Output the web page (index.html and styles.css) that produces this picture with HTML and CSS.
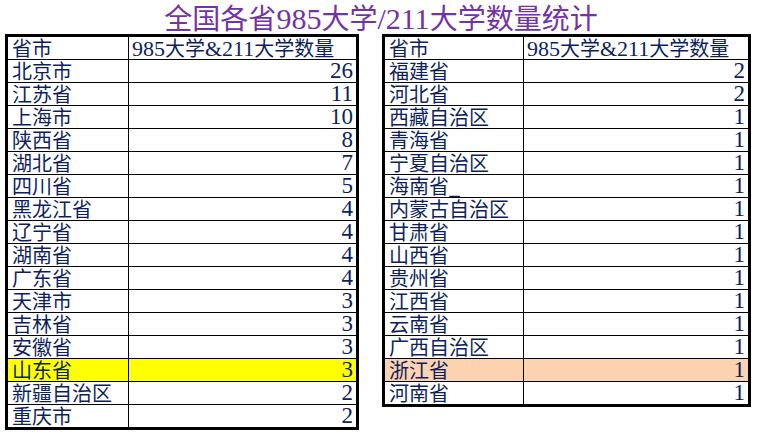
FILE: index.html
```html
<!DOCTYPE html>
<html lang="zh">
<head>
<meta charset="utf-8">
<link rel="stylesheet" href="styles.css">
</head>
<body>
<div class="page">
  <h1 class="title">全国各省<span class="lat">985</span>大学<span class="lat">/211</span>大学数量统计</h1>
  <div class="tables">
    <table class="sheet sheet-left">
      <colgroup><col class="c1"><col></colgroup>
      <tr><td><div class="cell">省市</div></td><td class="hd"><div class="cell"><span class="lat">985</span>大学<span class="lat">&amp;211</span>大学数量</div></td></tr>
      <tr><td><div class="cell">北京市</div></td><td class="num"><div class="cell">26</div></td></tr>
      <tr><td><div class="cell">江苏省</div></td><td class="num"><div class="cell">11</div></td></tr>
      <tr><td><div class="cell">上海市</div></td><td class="num"><div class="cell">10</div></td></tr>
      <tr><td><div class="cell">陕西省</div></td><td class="num"><div class="cell">8</div></td></tr>
      <tr><td><div class="cell">湖北省</div></td><td class="num"><div class="cell">7</div></td></tr>
      <tr><td><div class="cell">四川省</div></td><td class="num"><div class="cell">5</div></td></tr>
      <tr><td><div class="cell">黑龙江省</div></td><td class="num"><div class="cell">4</div></td></tr>
      <tr><td><div class="cell">辽宁省</div></td><td class="num"><div class="cell">4</div></td></tr>
      <tr><td><div class="cell">湖南省</div></td><td class="num"><div class="cell">4</div></td></tr>
      <tr><td><div class="cell">广东省</div></td><td class="num"><div class="cell">4</div></td></tr>
      <tr><td><div class="cell">天津市</div></td><td class="num"><div class="cell">3</div></td></tr>
      <tr><td><div class="cell">吉林省</div></td><td class="num"><div class="cell">3</div></td></tr>
      <tr><td><div class="cell">安徽省</div></td><td class="num"><div class="cell">3</div></td></tr>
      <tr class="hl-yellow"><td><div class="cell">山东省</div></td><td class="num"><div class="cell">3</div></td></tr>
      <tr><td><div class="cell">新疆自治区</div></td><td class="num"><div class="cell">2</div></td></tr>
      <tr><td><div class="cell">重庆市</div></td><td class="num"><div class="cell">2</div></td></tr>
    </table>
    <table class="sheet sheet-right">
      <colgroup><col class="c1"><col></colgroup>
      <tr><td><div class="cell">省市</div></td><td class="hd"><div class="cell"><span class="lat">985</span>大学<span class="lat">&amp;211</span>大学数量</div></td></tr>
      <tr><td><div class="cell">福建省</div></td><td class="num"><div class="cell">2</div></td></tr>
      <tr><td><div class="cell">河北省</div></td><td class="num"><div class="cell">2</div></td></tr>
      <tr><td><div class="cell">西藏自治区</div></td><td class="num"><div class="cell">1</div></td></tr>
      <tr><td><div class="cell">青海省</div></td><td class="num"><div class="cell">1</div></td></tr>
      <tr><td><div class="cell">宁夏自治区</div></td><td class="num"><div class="cell">1</div></td></tr>
      <tr><td><div class="cell">海南省_</div></td><td class="num"><div class="cell">1</div></td></tr>
      <tr><td><div class="cell">内蒙古自治区</div></td><td class="num"><div class="cell">1</div></td></tr>
      <tr><td><div class="cell">甘肃省</div></td><td class="num"><div class="cell">1</div></td></tr>
      <tr><td><div class="cell">山西省</div></td><td class="num"><div class="cell">1</div></td></tr>
      <tr><td><div class="cell">贵州省</div></td><td class="num"><div class="cell">1</div></td></tr>
      <tr><td><div class="cell">江西省</div></td><td class="num"><div class="cell">1</div></td></tr>
      <tr><td><div class="cell">云南省</div></td><td class="num"><div class="cell">1</div></td></tr>
      <tr><td><div class="cell">广西自治区</div></td><td class="num"><div class="cell">1</div></td></tr>
      <tr class="hl-peach"><td><div class="cell">浙江省</div></td><td class="num"><div class="cell">1</div></td></tr>
      <tr><td><div class="cell">河南省</div></td><td class="num"><div class="cell">1</div></td></tr>
    </table>
  </div>
</div>
</body>
</html>
```
FILE: styles.css
```css
html, body {
  margin: 0;
  padding: 0;
  background: #ffffff;
}
.page {
  width: 758px;
  height: 432px;
  overflow: hidden;
}
.title {
  margin: 0;
  height: 34px;
  line-height: 34px;
  text-align: center;
  font-family: "Noto Sans CJK SC", sans-serif;
  font-weight: normal;
  font-size: 28px;
  color: #7332a6;
  padding-left: 4px;
  white-space: nowrap;
}
.title .lat {
  font-family: "Liberation Serif", serif;
  font-size: 30px;
  line-height: 1;
}
.tables {
  display: flex;
  align-items: flex-start;
  padding-left: 5px;
  gap: 23px;
}
.sheet {
  border-collapse: collapse;
  border: 3px solid #000;
  font-family: "Noto Sans CJK SC", sans-serif;
  font-size: 20px;
  color: #0d1f5e;
  table-layout: fixed;
}
.sheet-left { width: 354px; }
.sheet-left .c1 { width: 122px; }
.sheet-right { width: 369px; }
.sheet-right .c1 { width: 140px; }
.sheet td {
  border: 1px solid #000;
  padding: 0 2px 0 4px;
}
.sheet .cell {
  height: 22px;
  line-height: 22px;
  white-space: nowrap;
}
.sheet td.num {
  text-align: right;
  font-family: "Liberation Serif", serif;
  font-size: 23px;
  padding-right: 3px;
}
.sheet td.hd {
  padding-left: 3px;
}
.sheet .lat {
  font-family: "Liberation Serif", serif;
  font-size: 22px;
  line-height: 1;
}
.hl-yellow td { background: #ffff00; }
.hl-peach td { background: #fbd3b0; }
```
